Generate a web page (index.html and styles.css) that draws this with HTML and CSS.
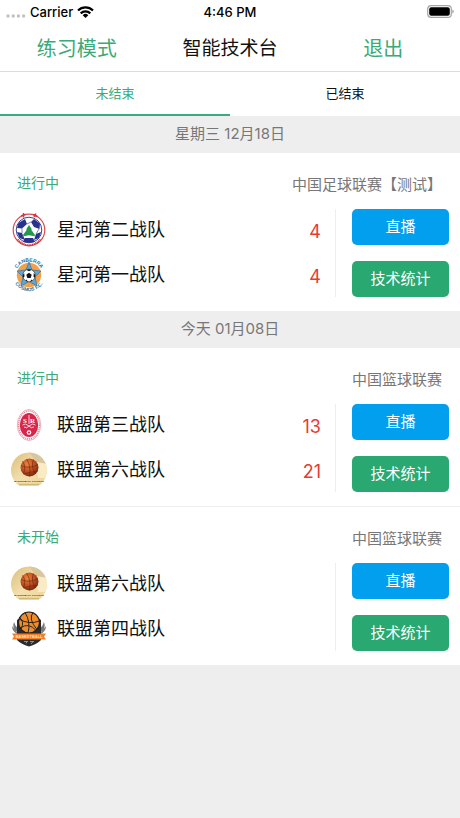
FILE: index.html
```html
<!DOCTYPE html>
<html lang="zh-CN">
<head>
<meta charset="utf-8">
<meta name="viewport" content="width=device-width, initial-scale=1">
<title>智能技术台</title>
<link rel="stylesheet" href="styles.css">
</head>
<body>
<svg class="defs" aria-hidden="true">
  <defs>
    <radialGradient id="ballShade" cx="38%" cy="32%" r="75%">
      <stop offset="0" stop-color="#e9863c"/><stop offset=".55" stop-color="#bd4b1d"/><stop offset="1" stop-color="#6e2410"/>
    </radialGradient>
    <linearGradient id="sand" x1="0" y1="0" x2="1" y2="1">
      <stop offset="0" stop-color="#d9bd7a"/><stop offset=".5" stop-color="#f3e0ae"/><stop offset="1" stop-color="#eed496"/>
    </linearGradient>
    <clipPath id="sandClip"><path d="M9 34A18 18 0 1 1 27 34Z"/></clipPath>
    <g id="college-art">
      <g clip-path="url(#sandClip)">
        <rect width="36" height="36" fill="url(#sand)"/>
        <path d="M18 0H36V12L25 10Z" fill="#d8c79c"/>
        <path d="M25 10L36 12V26H27Z" fill="#f9ebc6"/>
        <path d="M0 31H36V36H0Z" fill="#ecd595"/>
        <path d="M8 32.500H28" stroke="#c7aa68" stroke-width=".7"/>
      </g>
      <circle cx="18.500" cy="15.500" r="9" fill="url(#ballShade)"/>
      <path d="M10 13.500Q18.500 17.500 27 12.500M12.500 22Q19.500 19.500 26.500 19.500M15.500 7Q20.500 14.500 18.500 24.500M22.500 7.500Q19.500 14.500 24.500 22M11.500 9.500Q15.500 14.500 12.500 21.500" fill="none" stroke="#6a2411" stroke-width=".6"/>
    </g>
  </defs>
</svg>

<header class="top">
  <div class="status">
    <div class="carrier">
      <svg width="20" height="4" viewBox="0 0 20 4" aria-hidden="true"><g fill="#c2c2c2"><circle cx="2" cy="2" r="1.700"/><circle cx="7.200" cy="2" r="1.700"/><circle cx="12.400" cy="2" r="1.700"/><circle cx="17.600" cy="2" r="1.700"/></g></svg>
      <span>Carrier</span>
      <svg class="wifi" width="17" height="12" viewBox="0 0 17 12" aria-hidden="true"><g fill="none" stroke="#000" stroke-width="2.200"><path d="M1 4.500A10.700 10.700 0 0 1 16 4.500"/><path d="M3.700 7.400A6.800 6.800 0 0 1 13.300 7.400"/></g><path d="M5.700 9.200A4 4 0 0 1 11.300 9.200L8.500 12Z"/></svg>
    </div>
    <span>4:46 PM</span>
    <svg class="battery" width="27" height="13" viewBox="0 0 27 13" aria-hidden="true"><rect x=".7" y=".7" width="23.600" height="11.600" rx="3.400" fill="#fff" stroke="#a5a5a5" stroke-width="1.200"/><rect x="2.200" y="2.200" width="20.600" height="8.600" rx="2"/><path d="M25.300 4.500Q26.800 5 26.800 6.500T25.300 8.500Z" fill="#a5a5a5"/></svg>
  </div>
  <nav class="nav">
    <button type="button" class="nav-btn">练习模式</button>
    <h1>智能技术台</h1>
    <button type="button" class="nav-btn">退出</button>
  </nav>
</header>

<div class="tabs" role="tablist">
  <button type="button" class="tab active" role="tab" aria-selected="true">未结束</button>
  <button type="button" class="tab" role="tab" aria-selected="false">已结束</button>
</div>

<main>
  <section>
    <h2 class="date">星期三 12月18日</h2>
    <article class="match">
      <div class="meta"><span class="state">进行中</span><span class="league">中国足球联赛【测试】</span></div>
      <div class="body">
        <div class="teams">
          <div class="team">
            <svg class="logo" viewBox="0 0 36 36" aria-hidden="true">
              <circle cx="18" cy="18" r="15.800" fill="#fff" stroke="#d84a50" stroke-width="1.200"/>
              <circle cx="18" cy="18" r="12.800" fill="#fff" stroke="#262c86" stroke-width=".9"/>
              <path d="M7.500 11L14 7L16 12L11 16.500L6 16ZM23 7L29 11.500L28.500 17L23 15L20 10ZM6 20L11 21L14 28L8.500 26ZM30 20L25 22L23 28L28 26ZM14 26H22L24 29.500Q18 32 12 29.500Z" fill="#29328f"/>
              <path d="M16 12L20 10M11 16.500L11 21M28 17L25 22" stroke="#29328f" stroke-width=".6"/>
              <path d="M18 13L21 17.500H20L24 23H12L16 17.500H15Z" fill="#23974b"/>
              <path d="M11 24Q18 21.500 25 24" fill="none" stroke="#23974b"/>
              <path d="M6.500 27.500Q18 39 29.500 27.500" fill="none" stroke="#d8333d" stroke-width="1.800" stroke-dasharray="1.300 .5"/>
              <path d="M10 4L14.500 2.500M12.500 1V5.500M22 2.500L26.500 4.500M23 5L25 1.500" stroke="#d8333d" stroke-width="1.400"/>
            </svg>
            <span class="name">星河第二战队</span><span class="score">4</span>
          </div>
          <div class="team">
            <svg class="logo" viewBox="0 0 36 36" aria-hidden="true">
              <path id="arcTop" d="M4.500 16A13.700 13.700 0 0 1 31.500 16" fill="none"/>
              <path id="arcBottom" d="M1.500 20A16.700 16.700 0 0 0 34.500 20" fill="none"/>
              <circle cx="18" cy="18" r="12.200" fill="#f2a04b"/>
              <path d="M18 5L21 13L30 14L24 20L26 29L18 24.500L10 29L12 20L6 14L15 13Z" fill="#58a9dc" stroke="#2b6798" stroke-width=".6"/>
              <circle cx="18" cy="18.500" r="6.300" fill="#fff" stroke="#222" stroke-width=".6"/>
              <path d="M18 15.800L20.700 17.700L19.700 21H16.300L15.300 17.700ZM15.500 12.900L18 12.200L20.500 12.900L18 14.300ZM11.800 18L13.200 16L13.500 19.500L12.200 21ZM24.200 18L22.800 16L22.500 19.500L23.800 21ZM14.500 23.500L15.500 22.500L17 24.700ZM21.500 23.500L20.500 22.500L19 24.700Z" fill="#161616"/>
              <text class="crest-text"><textPath href="#arcTop" startOffset="50%" text-anchor="middle">CANBERRA</textPath></text>
              <text class="crest-text"><textPath href="#arcBottom" startOffset="50%" text-anchor="middle">COSMOS F.C.</textPath></text>
            </svg>
            <span class="name">星河第一战队</span><span class="score">4</span>
          </div>
        </div>
        <div class="actions"><button type="button" class="btn live">直播</button><button type="button" class="btn stats">技术统计</button></div>
      </div>
    </article>
  </section>

  <section>
    <h2 class="date">今天 01月08日</h2>
    <article class="match">
      <div class="meta"><span class="state">进行中</span><span class="league">中国篮球联赛</span></div>
      <div class="body">
        <div class="teams">
          <div class="team">
            <svg class="logo" viewBox="0 0 36 36" aria-hidden="true">
              <ellipse cx="18" cy="18" rx="11.700" ry="15.500" fill="#fff" stroke="#e390a0" stroke-width=".7"/>
              <ellipse cx="18" cy="18" rx="10.400" ry="14" fill="none" stroke="#e58496" stroke-width="1.300" stroke-dasharray="1.200 .8"/>
              <ellipse cx="18" cy="18" rx="9.200" ry="12" fill="#d7264b"/>
              <text x="12" y="16" class="reims-text">S</text><text x="19" y="16" class="reims-text">R</text>
              <path d="M18 8V17M11.500 18Q14 15.500 18 19Q22 15.500 24.500 18M13 20Q16 22 18 19Q20 22 23 20" fill="none" stroke="#fff" stroke-width=".8"/>
              <circle cx="18" cy="25.500" r="2.300" fill="#fff"/><path d="M18 24.200L19.200 25.200L18.700 26.500H17.300L16.800 25.200Z" fill="#d7264b"/>
            </svg>
            <span class="name">联盟第三战队</span><span class="score">13</span>
          </div>
          <div class="team">
            <svg class="logo" viewBox="0 0 72 72" aria-hidden="true"><use href="#college-art" transform="scale(2)"/><text x="36" y="60" class="college-text" text-anchor="middle">BASKETBALL COLLEGE</text></svg>
            <span class="name">联盟第六战队</span><span class="score">21</span>
          </div>
        </div>
        <div class="actions"><button type="button" class="btn live">直播</button><button type="button" class="btn stats">技术统计</button></div>
      </div>
    </article>
    <article class="match">
      <div class="meta"><span class="state">未开始</span><span class="league">中国篮球联赛</span></div>
      <div class="body">
        <div class="teams">
          <div class="team">
            <svg class="logo" viewBox="0 0 72 72" aria-hidden="true"><use href="#college-art" transform="scale(2)"/><text x="36" y="60" class="college-text" text-anchor="middle">BASKETBALL COLLEGE</text></svg>
            <span class="name">联盟第六战队</span>
          </div>
          <div class="team">
            <svg class="logo" viewBox="0 0 36 36" aria-hidden="true">
              <path d="M3 11Q0 18 8 22L7 17Q4 15 3 11ZM33 11Q36 18 28 22L29 17Q32 15 33 11ZM1 15Q1 21 8 24M35 15Q35 21 28 24" fill="#77797b"/>
              <path d="M6 9L18 1L30 9V29Q26 33 18 35.500Q10 33 6 29Z" fill="#292b2d"/>
              <circle cx="18" cy="11.500" r="10.500" fill="#f08b2c" stroke="#222" stroke-width="1.200"/>
              <path d="M8 8Q18 14 28.500 10M14 1.500Q20 11 17 22M22 1.500Q17 8 26 18.500M9 17Q18 11 25 19.500M8 6Q14 10 10 18.500" fill="none" stroke="#252525" stroke-width="1"/>
              <path d="M1 22.500H35L33 25.500L35 28.500H1L3 25.500Z" fill="#f17d25"/>
              <text x="18" y="27" class="ribbon-text" text-anchor="middle">BASKETBALL</text>
              <path d="M13 30.500H17M19 30.500H23M15 32.500L16 30.500M20 33L22 30.500" stroke="#aaa" stroke-width=".8"/>
            </svg>
            <span class="name">联盟第四战队</span>
          </div>
        </div>
        <div class="actions"><button type="button" class="btn live">直播</button><button type="button" class="btn stats">技术统计</button></div>
      </div>
    </article>
  </section>
</main>
</body>
</html>
```
FILE: styles.css
```css
* { box-sizing: border-box; }

body {
  margin: 0;
  background: #eee;
  color: #111;
  font-family: Inter, "Noto Sans CJK SC", sans-serif;
  font-size: 15px;
  line-height: 20px;
}

button {
  margin: 0;
  padding: 0;
  border: 0;
  background: none;
  color: inherit;
  font: inherit;
  cursor: pointer;
}

h1, h2 { margin: 0; font-weight: 400; }

.defs { position: absolute; width: 0; height: 0; }

.top { background: #fff; border-bottom: 1px solid #dcdcdc; }

.status {
  display: grid;
  grid-template-columns: 1fr auto 1fr;
  align-items: center;
  height: 23px;
  padding: 0 6px;
  color: #000;
  font-size: 13px;
  font-weight: 500;
}
.carrier { display: flex; align-items: center; gap: 4px; }
.carrier svg:first-child { margin-top: 8px; }
.battery { justify-self: end; }

.nav {
  display: grid;
  grid-template-columns: 1fr 1fr 1fr;
  align-items: center;
  height: 48px;
  padding-top: 3px;
  text-align: center;
}
.nav h1 { font-size: 19px; }
.nav-btn { color: #3aaa78; font-size: 20px; line-height: 28px; }

.tabs { display: flex; height: 44px; background: #fff; }
.tab { flex: 1; border-bottom: 2px solid transparent; font-size: 13px; }
.tab.active { color: #3aaa78; border-color: #3aaa83; }

.date {
  height: 37px;
  color: #777;
  font-size: 15px;
  line-height: 36px;
  text-align: center;
}

.match { padding: 20px 11px 14px 11px; background: #fff; }
.match + .match { border-top: 1px solid #eee; }

.meta { display: flex; justify-content: space-between; padding: 0 7px 0 6px; }
.state { color: #3aaa78; font-size: 14px; }
.league { color: #777; padding-top: 2px; }

.body { display: flex; margin-top: 14px; }
.teams {
  flex: 1;
  display: flex;
  flex-direction: column;
  gap: 9px;
  padding: 3px 14px 4px 0;
  border-right: 1px solid #eee;
}
.team { display: flex; align-items: center; height: 36px; }
.logo { width: 36px; height: 36px; margin-right: 10px; overflow: visible; }
.name { flex: 1; font-size: 18px; }
.score { padding-top: 4px; color: #e63b32; font-size: 18px; }

.actions {
  display: flex;
  flex-direction: column;
  gap: 16px;
  width: 113px;
  padding-left: 16px;
}
.btn { height: 36px; border-radius: 5px; color: #fff; }
.live { background: #019fed; }
.stats { background: #29a871; }

.college-text { font: 700 5px "Liberation Sans", sans-serif; fill: #3b2710; }
.crest-text { font: 700 5px "Liberation Sans", sans-serif; fill: #2c7098; }
.reims-text { font: 700 7px "Liberation Serif", serif; fill: #fff; }
.ribbon-text { font: 700 4px "Liberation Sans", sans-serif; fill: #ffe0bd; }
```
